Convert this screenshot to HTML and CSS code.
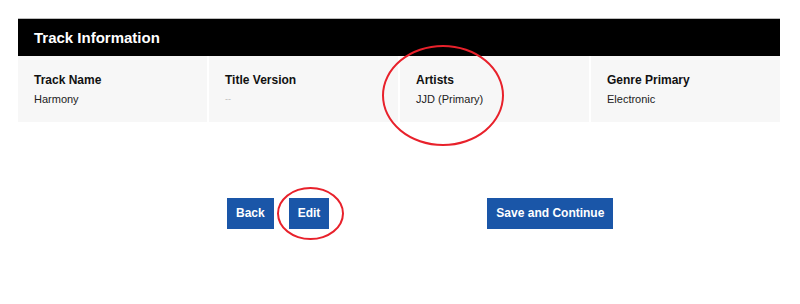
FILE: index.html
```html
<!DOCTYPE html>
<html lang="en">
<head>
<meta charset="utf-8">
<title>Track Information</title>
<link rel="stylesheet" href="styles.css">
</head>
<body>
<div class="page">
  <section class="panel">
    <div class="panel-head">Track Information</div>
    <div class="fields">
      <div class="field">
        <div class="label">Track Name</div>
        <div class="value">Harmony</div>
      </div>
      <div class="field">
        <div class="label">Title Version</div>
        <div class="value empty">--</div>
      </div>
      <div class="field">
        <div class="label">Artists</div>
        <div class="value">JJD (Primary)</div>
      </div>
      <div class="field">
        <div class="label">Genre Primary</div>
        <div class="value">Electronic</div>
      </div>
    </div>
  </section>
  <div class="actions">
    <div class="group">
      <button class="btn">Back</button>
      <button class="btn">Edit</button>
    </div>
    <button class="btn save">Save and Continue</button>
  </div>
  <div class="mark mark-artists"></div>
  <div class="mark mark-edit"></div>
</div>
</body>
</html>
```

FILE: styles.css
```css
* { box-sizing: border-box; }
html, body { margin: 0; padding: 0; background: #fff; }
body { font-family: "Liberation Sans", Arial, sans-serif; }

.page {
  position: relative;
  width: 800px;
  height: 304px;
  padding: 18px 20px 0 18px;
}

.panel { width: 762px; }

.panel-head {
  height: 38px;
  background: #000;
  border-top: 1px solid #bdbdbd;
  color: #fff;
  font-weight: bold;
  font-size: 15px;
  line-height: 37px;
  padding-left: 16px;
}

.fields {
  display: grid;
  grid-template-columns: repeat(4, 1fr);
  column-gap: 2px;
  background: #fff;
}

.field {
  background: #f7f7f7;
  height: 66px;
  padding: 17px 16px 0 16px;
}

.label {
  font-size: 12px;
  font-weight: bold;
  color: #111;
  line-height: 14px;
}

.value {
  margin-top: 6px;
  font-size: 11px;
  line-height: 13px;
  color: #222;
}

.value.empty { color: #bbb; font-size: 9px; }

.actions {
  display: flex;
  align-items: flex-start;
  margin-top: 76px;
  padding-left: 209px;
}

.group { display: flex; gap: 15px; }

.btn {
  height: 31px;
  padding: 0 9px;
  border: none;
  border-radius: 0;
  background: #1a56a8;
  color: #fff;
  font-family: "Liberation Sans", Arial, sans-serif;
  font-weight: bold;
  font-size: 12px;
  line-height: 31px;
  white-space: nowrap;
}

.save { margin-left: 158px; min-width: 126px; }

.mark {
  position: absolute;
  border: 2px solid #e8212b;
  border-radius: 50%;
}

.mark-artists { left: 382px; top: 45px; width: 122px; height: 101px; }
.mark-edit { left: 277px; top: 187px; width: 67px; height: 53px; }
```
